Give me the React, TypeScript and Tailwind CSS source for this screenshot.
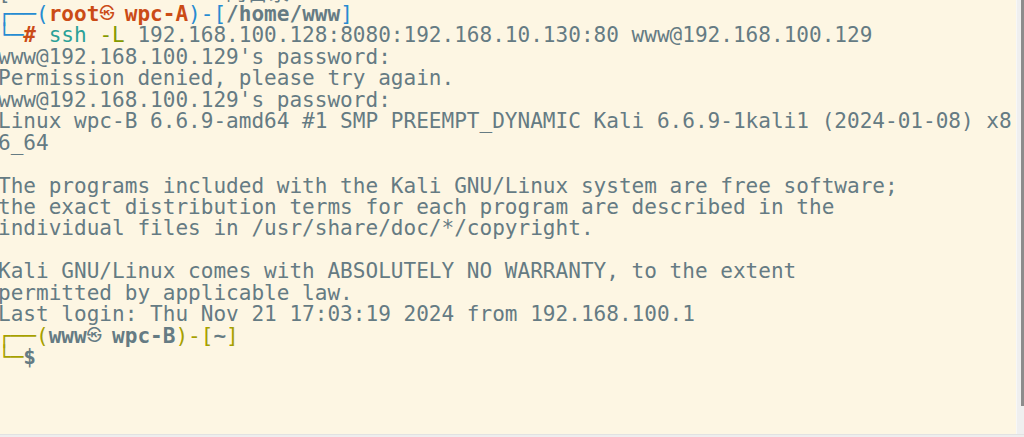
const blue = "text-[#268bd2]"
const red = "text-[#cb4b16]"
const olive = "text-[#a6a000]"

function Cell({ children, className = "" }: { children: React.ReactNode; className?: string }) {
  // wide glyph: takes two terminal columns
  return (
    <span className={`inline-block w-[25.36px] text-[15px] align-top ${className}`}>{children}</span>
  )
}

const plainLines = [
  "www@192.168.100.129's password:",
  "Permission denied, please try again.",
  "www@192.168.100.129's password:",
  "Linux wpc-B 6.6.9-amd64 #1 SMP PREEMPT_DYNAMIC Kali 6.6.9-1kali1 (2024-01-08) x8",
  "6_64",
  "",
  "The programs included with the Kali GNU/Linux system are free software;",
  "the exact distribution terms for each program are described in the",
  "individual files in /usr/share/doc/*/copyright.",
  "",
  "Kali GNU/Linux comes with ABSOLUTELY NO WARRANTY, to the extent",
  "permitted by applicable law.",
  "Last login: Thu Nov 21 17:03:19 2024 from 192.168.100.1",
]

export default function App() {
  return (
    <div className="flex h-[437px] w-[1024px] flex-col overflow-hidden bg-[#ececec]">
      <div className="flex h-[434px]">
        <div className="w-[1016px] overflow-hidden bg-[#fdf6e3]">
          <pre
            className="ml-[-2px] mt-[-18.5px] text-[21.06px] leading-[21.45px] text-[#657b83]"
            style={{ fontFamily: '"DejaVu Sans Mono", "Noto Sans CJK SC", monospace' }}
          >
            <div>
              <span>[                 </span>
              <span>的目录</span>
            </div>
            <div>
              <span className={blue}>┌──(</span>
              <span className={`font-bold ${red}`}>
                root<Cell>㉿</Cell>wpc-A
              </span>
              <span className={blue}>)-[</span>
              <span className="font-bold">/home/www</span>
              <span className={blue}>]</span>
            </div>
            <div>
              <span className={blue}>└─</span>
              <span className={`font-bold ${red}`}>#</span>{" "}
              <span className="text-[#2aa198]">ssh</span>{" "}
              <span className="text-[#859900]">-L</span> 192.168.100.128:8080:192.168.10.130:80 www@192.168.100.129
            </div>
            {plainLines.map((l, i) => (
              <div key={i}>{l || " "}</div>
            ))}
            <div>
              <span className={olive}>┌──(</span>
              <span className="font-bold">
                www<Cell>㉿</Cell>wpc-B
              </span>
              <span className={olive}>)-[</span>
              <span className="font-bold">~</span>
              <span className={olive}>]</span>
            </div>
            <div>
              <span className={olive}>└─</span>
              <span className="font-bold">$</span>
            </div>
          </pre>
        </div>
        <div className="flex w-[8px] justify-end border-l border-[#f7f7f7] bg-[#efefef]">
          <div className="h-[406px] w-[3px] bg-[#8c8c8c]" />
        </div>
      </div>
      <div className="h-[3px] border-t border-[#e2e2e2] bg-[#eeeeee]" />
    </div>
  )
}
